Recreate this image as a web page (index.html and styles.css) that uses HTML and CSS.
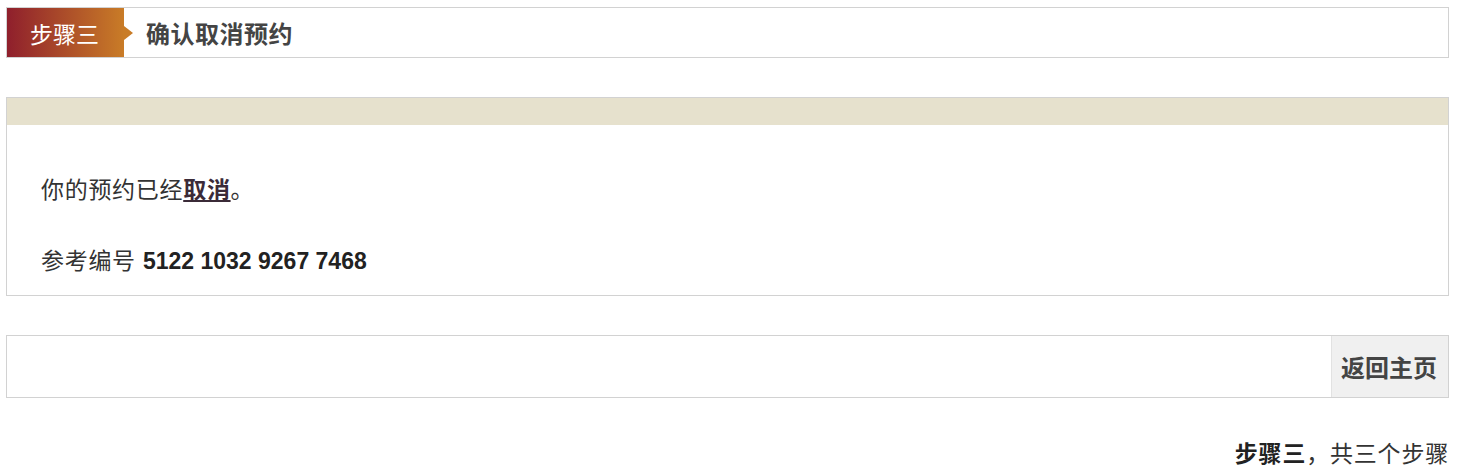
FILE: index.html
```html
<!DOCTYPE html>
<html lang="zh-CN">
<head>
  <meta charset="UTF-8">
  <title>确认取消预约</title>
  <link rel="stylesheet" href="styles.css">
</head>
<body>
  <div class="page">
    <div class="step-bar">
      <div class="step-label">步骤三</div>
      <div class="step-title">确认取消预约</div>
    </div>

    <div class="panel">
      <div class="panel-head"></div>
      <div class="panel-body">
        <p class="msg">你的预约已经<a href="#" class="strong-link">取消</a>。</p>
        <p class="msg">参考编号 <span class="ref">5122 1032 9267 7468</span></p>
      </div>
    </div>

    <div class="actions">
      <a href="#" class="home-btn">返回主页</a>
    </div>

    <div class="step-count"><b>步骤三</b>，共三个步骤</div>
  </div>
</body>
</html>
```

FILE: styles.css
```css
body {
  margin: 0;
  font-family: "Liberation Sans", "Noto Sans CJK SC", sans-serif;
  font-size: 23px;
  color: #333;
  background: #fff;
}
.page {
  padding: 7px 9px 0 6px;
}
.step-bar {
  display: flex;
  align-items: center;
  height: 49px;
  border: 1px solid #d2d2d2;
}
.step-label {
  position: relative;
  align-self: stretch;
  display: flex;
  align-items: center;
  width: 94px;
  padding-left: 23px;
  color: #fff;
  background: linear-gradient(to right, #8f1f2c, #c97c27);
}
.step-label::after {
  content: "";
  position: absolute;
  right: -9px;
  top: 50%;
  margin-top: -7px;
  border-top: 7px solid transparent;
  border-bottom: 7px solid transparent;
  border-left: 9px solid #c97c27;
}
.step-title {
  margin-left: 22px;
  font-size: 24px;
  letter-spacing: 0.5px;
  font-weight: bold;
  color: #444;
}
.panel {
  margin-top: 39px;
  border: 1px solid #d2d2d2;
}
.panel-head {
  height: 27px;
  background-color: #e6e1cd;
}
.panel-body {
  padding: 50px 34px 19px;
}
.msg {
  margin: 0;
  line-height: 30px;
  letter-spacing: 0.7px;
}
.msg + .msg {
  margin-top: 41px;
}
.strong-link {
  color: #3b2b38;
  font-weight: bold;
  text-decoration: underline;
}
.ref {
  font-weight: bold;
  letter-spacing: 0;
  color: #222;
}
.actions {
  display: flex;
  justify-content: flex-end;
  margin-top: 39px;
  height: 61px;
  border: 1px solid #d2d2d2;
}
.home-btn {
  display: flex;
  align-items: center;
  padding: 0 11px 0 9px;
  background-color: #f0f0f0;
  border-left: 1px solid #e2e2e2;
  color: #444;
  font-size: 24px;
  font-weight: bold;
  text-decoration: none;
}
.step-count {
  margin-top: 41px;
  text-align: right;
  line-height: 30px;
  letter-spacing: 0.8px;
  color: #333;
}
.step-count b {
  color: #222;
}
```
